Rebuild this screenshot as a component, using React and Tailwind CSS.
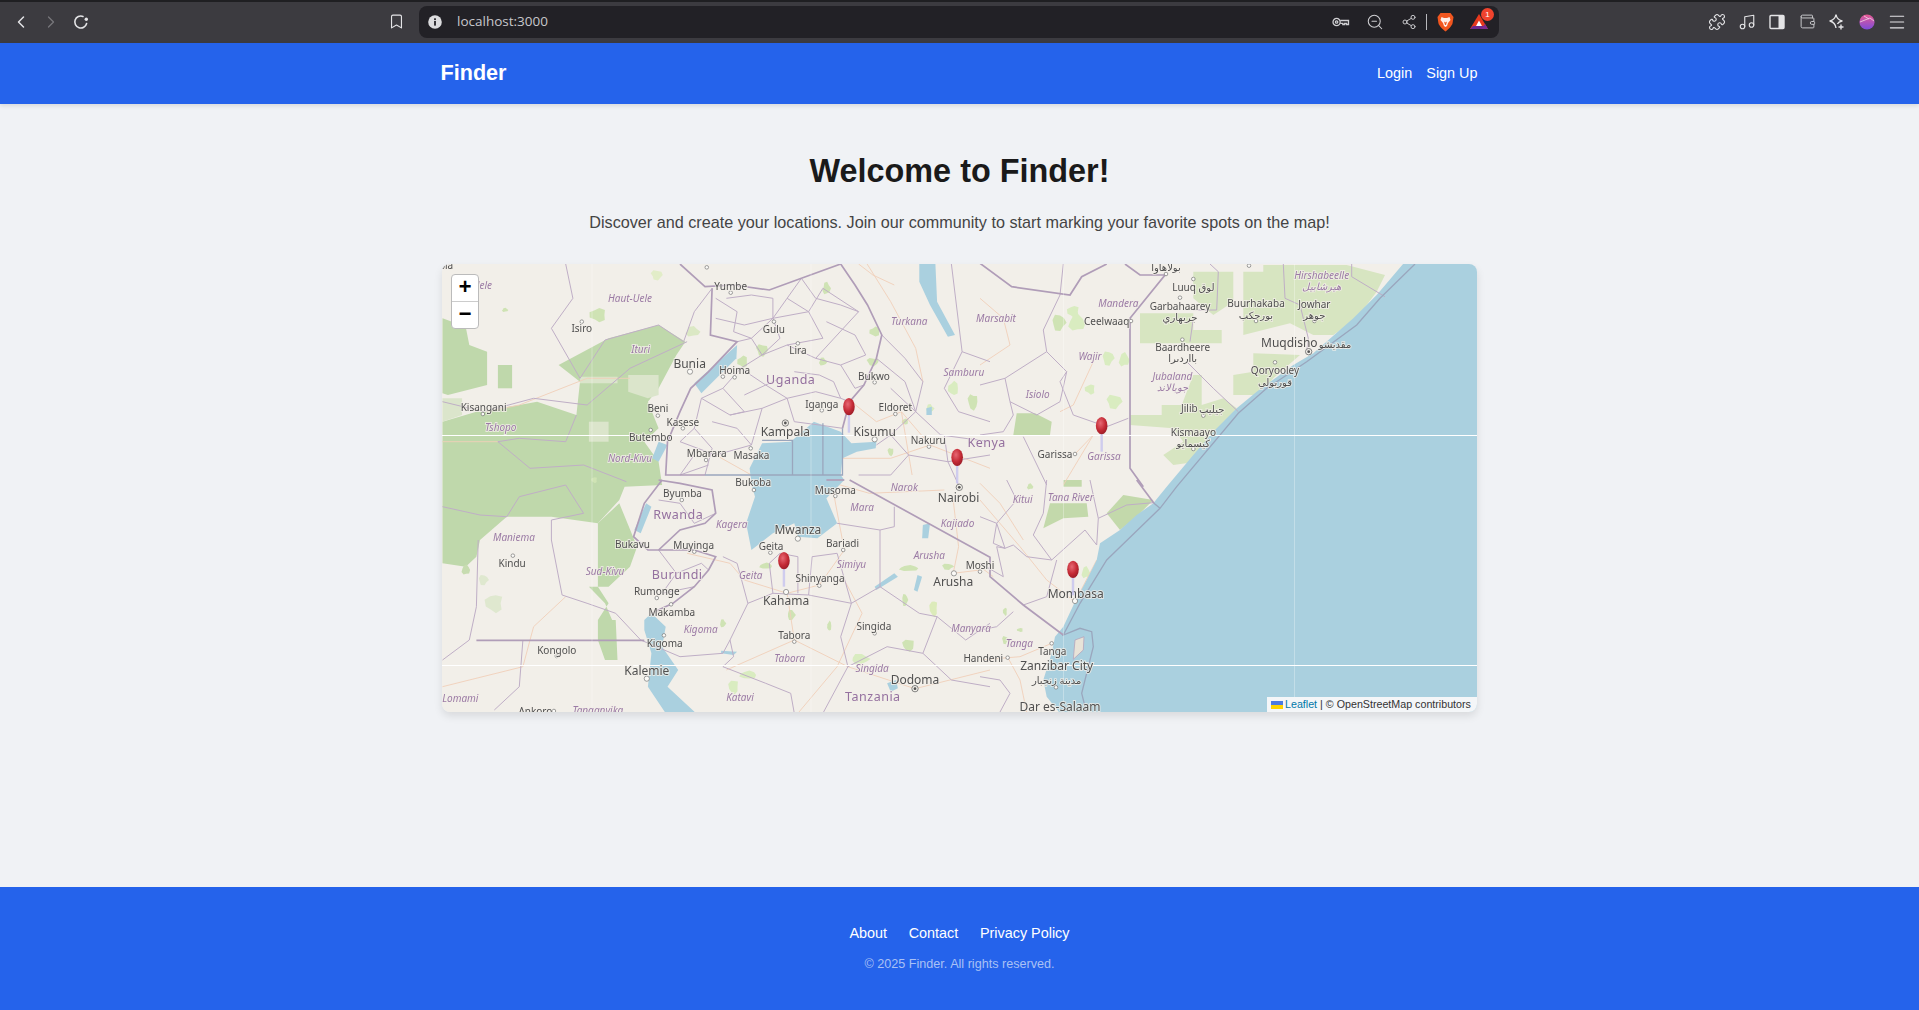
import React from "react";
import { ChevronLeft, ChevronRight, Bookmark, ZoomOut, Share2, Puzzle, Music, Wallet, Menu } from "lucide-react";

const T = {
  a: (x, y) => [430 + x / 2.8, 255 + y / 3],
  b: (x, y) => [430 + x / 2.8, 480 + y / 3],
  c: (x, y) => [980 + x / 3, 255 + y / 3],
  d: (x, y) => [980 + x / 3, 480 + y / 3],
};
const P = (...segs) => {
  const out = [];
  segs.forEach(([k, ...v]) => {
    for (let i = 0; i < v.length; i += 2) out.push(T[k](v[i], v[i + 1]).map((n) => n.toFixed(1)).join(","));
  });
  return out.join(" ");
};
const blobPts = (cx, cy, rx, ry, seed) => {
  const out = [];
  for (let i = 0; i < 9; i++) {
    const a = (i / 9) * Math.PI * 2;
    const j = 0.7 + 0.45 * Math.abs(Math.sin(seed * 7.3 + i * 2.17));
    out.push(`${(cx + Math.cos(a) * rx * j).toFixed(1)},${(cy + Math.sin(a) * ry * j).toFixed(1)}`);
  }
  return out.join(" ");
};

const LAND = "#f2efe9";
const WATER = "#aad0df";
const FOREST = "#bfd8ab";
const SOFT = "#d7e5c1";

const forest = [
  P(["a", 35, 190, 100, 215, 110, 270, 160, 290, 160, 390, 50, 420, 35, 415]),
  P(["a", 35, 500, 130, 470, 250, 450, 300, 440, 410, 480, 420, 380, 360, 330, 500, 250, 640, 210, 715, 260, 690, 300, 640, 400, 610, 440, 640, 520, 600, 560, 640, 620, 650, 690], ["b", 545, 20, 530, 60, 470, 130, 340, 110, 215, 110, 140, 180, 130, 230, 100, 260, 35, 250]),
  P(["b", 470, 130, 530, 70, 580, 200, 560, 260, 500, 320, 445, 320, 490, 370, 510, 420, 470, 420, 520, 420, 525, 540, 490, 540, 470, 480, 470, 420, 500, 370, 470, 320]),
  P(["a", 190, 330, 230, 330, 230, 400, 190, 400]),
];
const patches = [
  P(["a", 555, 360, 640, 360, 640, 420, 610, 430, 555, 410]),
  P(["a", 420, 365, 525, 365, 525, 385, 420, 385]),
  P(["a", 445, 500, 500, 500, 500, 560, 445, 560]),
  P(["a", 35, 430, 90, 430, 90, 480, 35, 500]),
];
const soft = [
  P(["c", 480, 175, 640, 175, 640, 225, 725, 225, 725, 265, 480, 265]),
  P(["c", 640, 50, 760, 50, 760, 140, 700, 180, 640, 130]),
  P(["c", 790, 50, 850, 50, 850, 30, 1100, 30, 1215, 60, 1190, 110, 1130, 190, 1060, 240, 1000, 240, 930, 205, 790, 240]),
  P(["c", 820, 295, 960, 300, 880, 370, 840, 420, 760, 420, 760, 360, 820, 350]),
  P(["c", 640, 360, 665, 360, 665, 450, 730, 430, 770, 460, 720, 520, 650, 620, 580, 630, 550, 600, 610, 560, 580, 520, 450, 510, 450, 480, 545, 480, 545, 450, 605, 450]),
];
const softForest = [
  P(["d", 210, 70, 320, 70, 325, 110, 250, 115, 190, 145]),
  P(["d", 250, 0, 305, 0, 305, 20, 250, 20]),
  P(["c", 110, 475, 165, 475, 215, 500, 210, 540, 100, 540]),
  P(["d", 430, 45, 520, 60, 470, 110, 420, 150, 380, 100]),
];
const blobs = [
  ["c", 237, 203, 7, 8, "#cfe3b4"], ["c", 290, 205, 8, 8, "#d9ecc0"], ["c", 280, 170, 6, 6, "#d9ecc0"], ["c", 385, 310, 6, 7, "#d9ecc0"], ["c", 432, 315, 5, 7, "#d9ecc0"], ["c", 330, 403, 5, 5, "#d9ecc0"], ["c", 403, 440, 8, 7, "#d9ecc0"],
  ["a", 210, 165, 3, 2, "#cfe3b4"], ["a", 470, 180, 8, 7, "#cfe3b4"], ["a", 635, 60, 6, 5, "#e2edc8"], ["a", 735, 230, 7, 5, "#dbe8c4"], ["a", 875, 320, 5, 6, "#cfe3b4"], ["a", 930, 285, 6, 6, "#cfe3b4"], ["a", 1110, 100, 4, 6, "#cfe3b4"], ["a", 1245, 230, 5, 5, "#cfe3b4"], ["a", 1240, 320, 6, 4, "#cfe3b4"], ["a", 1100, 320, 4, 4, "#cfe3b4"], ["a", 1465, 400, 5, 7, "#d9ecc0"], ["a", 1520, 440, 5, 8, "#cfe3b4"], ["a", 1400, 460, 4, 4, "#d9ecc0"], ["a", 1330, 500, 3, 3, "#cfe3b4"], ["a", 1290, 590, 3, 4, "#cfe3b4"],
  ["b", 820, 430, 3, 4, "#cfe3b4"], ["b", 1118, 438, 2, 5, "#cfe3b4"], ["b", 1340, 495, 6, 6, "#cfe3b4"], ["b", 1205, 537, 9, 5, "#d9ecc0"], ["b", 890, 585, 8, 4, "#d9ecc0"], ["b", 850, 620, 5, 7, "#d9ecc0"], ["b", 1012, 405, 4, 5, "#cfe3b4"], ["b", 940, 258, 6, 3, "#cfe3b4"], ["b", 1410, 385, 4, 8, "#dcebba"], ["b", 1330, 360, 3, 6, "#cfe3b4"], ["b", 1340, 265, 9, 3, "#cfe3b4"], ["b", 180, 370, 9, 9, "#dfe8cf"], ["b", 150, 300, 5, 5, "#dfe8cf"], ["b", 100, 270, 4, 5, "#c7dcb0"], ["b", 460, 0, 3, 3, "#cfe3b4"], ["b", 1450, 260, 6, 3, "#cfe3b4"],
  ["d", 317, 278, 4, 6, "#d9ecc0"], ["d", 75, 395, 2, 4, "#cfe3b4"], ["d", 75, 480, 3, 4, "#cfe3b4"], ["d", 150, 20, 3, 3, "#cfe3b4"], ["d", 120, 450, 3, 2, "#cfe3b4"],
];

const sea = P(
  ["c", 1275, 20, 1190, 120, 1120, 190, 1000, 295, 940, 330, 830, 410, 770, 460, 700, 530, 640, 600, 560, 695],
  ["d", 520, 70, 470, 105, 420, 150, 360, 190, 350, 240, 320, 300, 285, 365, 250, 440, 225, 470, 215, 520, 190, 600, 200, 650, 240, 700, 1600, 700, 1600, -300],
  ["c", 1600, 20]
);
const zanzibar = P(["d", 285, 480, 312, 470, 310, 510, 280, 538]);
const lakes = [
  P(["a", 740, 385, 860, 270, 858, 310, 760, 415]),
  P(["a", 930, 565, 1010, 560, 1075, 500, 1150, 530, 1180, 565, 1250, 560, 1248, 580, 1195, 590, 1155, 610, 1150, 660], ["b", 1160, 0, 1110, 55, 1140, 130, 1085, 175, 1030, 170, 1020, 130, 960, 160, 900, 210, 885, 130, 910, 50, 900, 10], ["a", 895, 640]),
  P(["a", 1370, 27, 1415, 27, 1420, 140, 1470, 240, 1450, 245, 1400, 150, 1370, 80]),
  P(["b", 600, 420, 620, 400, 660, 440, 650, 500, 695, 570, 665, 620, 745, 700, 660, 700, 610, 620, 620, 520, 600, 450]),
  P(["b", 605, 70, 620, 80, 590, 160, 572, 150]),
  P(["a", 640, 560, 665, 570, 640, 620, 622, 610]),
  P(["b", 1300, 280, 1310, 290, 1250, 330, 1245, 320]),
  P(["b", 1365, 285, 1378, 290, 1365, 335, 1355, 330]),
  P(["b", 1280, 610, 1305, 600, 1310, 625, 1290, 635]),
  P(["b", 1380, 135, 1400, 130, 1395, 175, 1378, 175]),
  P(["b", 815, 512, 860, 515, 850, 525, 815, 520]),
  P(["a", 1390, 460, 1405, 455, 1405, 480, 1390, 480]),
];

const national = [
  P(["a", 700, 27, 770, 95, 850, 90, 950, 105, 1040, 70, 1150, 27, 1190, 90, 1225, 150, 1265, 240, 1250, 310, 1215, 390, 1175, 440, 1155, 520]),
  P(["a", 770, 660, 660, 660, 665, 560, 700, 470, 730, 400, 780, 350, 860, 260, 785, 240, 790, 100]),
  P(["b", 1175, 0, 1568, 232], ["d", 30, 290, 130, 375, 250, 465]),
  P(["c", 0, 25, 95, 95, 270, 120, 305, 65, 380, 27]),
  P(["c", 435, 27, 480, 60, 555, 60, 450, 190, 450, 640, 490, 695]),
  P(["d", 470, 0, 522, 70]),
  P(["b", 130, 481, 600, 481]),
  P(["b", 650, 0, 600, 70, 570, 170, 610, 210, 740, 210, 800, 230, 780, 270, 740, 320, 680, 370, 620, 400]),
  P(["b", 640, 0, 700, 10, 790, 30, 800, 100, 770, 130, 700, 150, 640, 210]),
  P(["b", 1110, 0, 1160, 0]),
];
const waterLines = [
  P(["a", 770, 660, 1155, 660, 1155, 520]),
  P(["a", 930, 556, 1015, 556, 1015, 660]),
  P(["a", 1100, 505, 1100, 660]),
  P(["d", 522, 70, 540, 85]),
  P(["c", 1305, 27, 1200, 130, 1130, 210, 980, 320, 860, 400, 775, 475, 590, 695], ["d", 540, 85, 380, 240, 300, 370, 250, 465, 300, 445, 335, 455, 340, 500, 305, 640, 320, 700]),
];
const admin = [
  P(["a", 380, 27, 400, 130, 340, 220, 420, 370, 490, 255, 640, 210, 710, 260, 740, 170, 790, 100]),
  P(["a", 800, 130, 860, 170, 850, 230, 900, 250, 960, 190, 1000, 130, 1040, 70]),
  P(["a", 860, 260, 900, 250, 930, 300, 870, 340, 820, 400, 760, 430, 740, 520, 700, 560]),
  P(["a", 930, 300, 1000, 270, 1080, 310, 1150, 330, 1190, 400, 1215, 390]),
  P(["a", 870, 340, 940, 390, 1000, 430, 1080, 410, 1150, 430, 1175, 440]),
  P(["a", 760, 430, 840, 480, 930, 460, 1000, 430, 1020, 500, 1090, 510, 1155, 520]),
  P(["a", 700, 560, 800, 600, 900, 570, 930, 460]),
  P(["a", 740, 520, 790, 580, 770, 660]),
  P(["a", 1000, 130, 1060, 170, 1100, 100, 1200, 170, 1080, 310]),
  P(["a", 960, 190, 1060, 170, 1100, 250, 1000, 270]),
  P(["a", 800, 190, 880, 210, 960, 190, 980, 250, 930, 300]),
  P(["a", 1110, 200, 1190, 240, 1220, 300, 1150, 330]),
  P(["a", 1040, 70, 1080, 130, 1150, 150, 1200, 170]),
  P(["a", 830, 130, 900, 120, 960, 130, 960, 190]),
  P(["a", 880, 420, 940, 390, 980, 370]),
  P(["a", 820, 400, 880, 470, 840, 480]),
  P(["a", 1020, 350, 1090, 360, 1130, 380, 1150, 430]),
  P(["a", 790, 500, 860, 520, 900, 570]),
  P(["a", 740, 600, 700, 660, 780, 630]),
  P(["a", 1265, 240, 1330, 310, 1380, 380, 1360, 470, 1430, 540, 1568, 560]),
  P(["a", 1250, 310, 1330, 380, 1360, 470, 1290, 540, 1250, 570]),
  P(["a", 1460, 27, 1490, 290, 1568, 320]),
  P(["a", 1490, 290, 1440, 400, 1480, 470, 1568, 500]),
  P(["a", 1290, 540, 1340, 600, 1290, 660, 1200, 660]),
  P(["a", 1340, 600, 1450, 620, 1568, 600]),
  P(["a", 1440, 540, 1450, 620, 1480, 690]),
  P(["a", 1290, 400, 1360, 470]),
  P(["a", 35, 440, 150, 470, 290, 430, 440, 450, 560, 340, 720, 260]),
  P(["a", 410, 480, 380, 560, 250, 550, 190, 560, 280, 640, 430, 630, 550, 680]),
  P(["b", 35, 80, 140, 105, 215, 110, 250, 50, 380, 15, 430, 100, 340, 120, 340, 180, 370, 345, 440, 370, 520, 400, 590, 480]),
  P(["b", 35, 540, 110, 480, 130, 380, 135, 180]),
  P(["b", 260, 480, 250, 620, 180, 690]),
  P(["b", 590, 480, 700, 530, 820, 520, 840, 480, 890, 370, 860, 250, 820, 230]),
  P(["b", 890, 370, 960, 340, 1060, 345, 1180, 370, 1260, 320, 1260, 150, 1140, 130]),
  P(["b", 840, 480, 850, 530, 820, 560, 940, 610, 1010, 640, 1020, 700]),
  P(["b", 1180, 370, 1150, 470, 1170, 560, 1100, 700]),
  P(["b", 1260, 320, 1370, 400, 1420, 410, 1380, 520, 1280, 500, 1170, 560]),
  P(["b", 1300, 80, 1300, 140, 1260, 150]),
  P(["b", 1380, 520, 1460, 600, 1568, 620]),
  P(["b", 1420, 410, 1500, 480, 1568, 430]),
  P(["b", 640, 60, 700, 70, 740, 130, 800, 100]),
  P(["b", 640, 210, 690, 280, 650, 340, 740, 320]),
  P(["b", 690, 280, 760, 250, 780, 270]),
  P(["b", 960, 340, 950, 250, 980, 220, 1030, 230, 1030, 340]),
  P(["b", 1060, 345, 1070, 230, 1140, 220, 1180, 370]),
  P(["d", 0, 250, 70, 290, 50, 200, 75, 205, 100, 195, 140, 230, 215, 240, 160, 165, 190, 100, 200, 0]),
  P(["d", 215, 240, 315, 150, 350, 195]),
  P(["d", 50, 130, 40, 190, 75, 205]),
  P(["d", 0, 110, 50, 130, 75, 205]),
  P(["d", 130, 375, 200, 350, 230, 240]),
  P(["d", 100, 395, 50, 440, 0, 450]),
  P(["d", 355, 115, 440, 75, 520, 68]),
  P(["d", 330, 0, 355, 115, 350, 195]),
  P(["d", 80, 0, 110, 60, 50, 130]),
  P(["d", 0, 590, 60, 600, 90, 640, 60, 696]),
  P(["c", 190, 225, 200, 290, 260, 350, 240, 380, 280, 480, 380, 515, 445, 490]),
  P(["c", 0, 390, 75, 370, 90, 440, 170, 480, 240, 440, 260, 350]),
  P(["c", 75, 370, 200, 290]),
  P(["c", 250, 27, 240, 120, 190, 225]),
  P(["c", 130, 545, 200, 690]),
  P(["c", 0, 540, 70, 530, 100, 480, 90, 440]),
  P(["c", 620, 320, 700, 400, 775, 470]),
  P(["c", 640, 190, 630, 260]),
  P(["c", 640, 165, 710, 165, 715, 50, 690, 27]),
  P(["c", 910, 27, 915, 130, 960, 150, 985, 250, 980, 290]),
  P(["c", 1115, 27, 1115, 65, 1215, 125]),
];
const roads = [
  P(["a", 160, 470, 250, 450, 440, 370, 560, 370]),
  P(["a", 1180, 440, 1250, 500, 1320, 470, 1400, 570, 1568, 640]),
  P(["a", 1150, 610, 1290, 610, 1400, 570]),
  P(["a", 1220, 20, 1290, 140, 1360, 280, 1380, 380]),
  P(["a", 35, 560, 190, 560]),
  P(["a", 800, 600, 900, 660]),
  P(["a", 1200, 27, 1240, 60, 1300, 90]),
  P(["a", 1320, 470, 1350, 660]),
  P(["b", 35, 620, 110, 600, 260, 560, 290, 440, 380, 350]),
  P(["b", 1160, 300, 1210, 400, 1140, 560, 1030, 700]),
  P(["b", 1020, 480, 1170, 560, 1358, 626, 1568, 570]),
  P(["b", 1000, 340, 1020, 480, 830, 570]),
  P(["b", 1130, 40, 1160, 210, 1090, 315, 1000, 340]),
  P(["b", 720, 220, 840, 250, 880, 300, 1000, 340]),
  P(["b", 1100, 0, 1230, 40, 1440, 30]),
  P(["b", 1465, 60, 1480, 200, 1465, 280, 1540, 270]),
  P(["d", 285, 365, 200, 300, 120, 200, 0, 60]),
  P(["d", 40, 290, 0, 260]),
  P(["d", 215, 490, 120, 530, 0, 540]),
  P(["d", 285, 365, 350, 240]),
  P(["c", 285, 597, 340, 540, 250, 690]),
  P(["c", 0, 130, 70, 190, 90, 270, 0, 330]),
  P(["c", 340, 320, 280, 450, 240, 470]),
  P(["d", 85, 535, 120, 600, 140, 696]),
  P(["d", 0, 10, 60, 70, 130, 180]),
];

const L = [
  ["a", 45, 32, "bia", "c"], ["a", 120, 90, "Bas-Uele", "r"], ["a", 560, 130, "Haut-Uele", "r"], ["a", 842, 95, "Yumbe", "c"], ["a", 963, 223, "Gulu", "c"], ["a", 425, 220, "Isiro", "c"], ["a", 590, 284, "Ituri", "r"], ["a", 1030, 287, "Lira", "c"], ["a", 727, 325, "Bunia", "C"], ["a", 853, 346, "Hoima", "c"], ["a", 1010, 374, "Uganda", "R"], ["a", 1243, 363, "Bukwo", "c"], ["a", 1342, 200, "Turkana", "r"], ["a", 1495, 353, "Samburu", "r"], ["a", 150, 458, "Kisangani", "c"], ["a", 638, 461, "Beni", "c"], ["a", 708, 501, "Kasese", "c"], ["a", 198, 517, "Tshopo", "r"], ["a", 618, 547, "Butembo", "c"], ["a", 1097, 447, "Iganga", "c"], ["a", 1303, 458, "Eldoret", "c"], ["a", 995, 531, "Kampala", "C"], ["a", 1245, 530, "Kisumu", "C"], ["a", 1395, 555, "Nakuru", "c"], ["a", 775, 596, "Mbarara", "c"], ["a", 900, 602, "Masaka", "c"], ["a", 560, 609, "Nord-Kivu", "r"], ["a", 905, 682, "Bukoba", "c"],
  ["b", 707, 40, "Byumba", "c"], ["b", 1135, 30, "Musoma", "c"], ["b", 1328, 22, "Narok", "r"], ["b", 1210, 83, "Mara", "r"], ["b", 1480, 52, "Nairobi", "C"], ["b", 695, 105, "Rwanda", "R"], ["b", 845, 133, "Kagera", "r"], ["b", 1477, 130, "Kajiado", "r"], ["b", 235, 172, "Maniema", "r"], ["b", 1030, 150, "Mwanza", "C"], ["b", 567, 193, "Bukavu", "c"], ["b", 738, 195, "Muyinga", "c"], ["b", 955, 198, "Geita", "c"], ["b", 1155, 190, "Bariadi", "c"], ["b", 230, 250, "Kindu", "c"], ["b", 1398, 225, "Arusha", "r"], ["b", 1180, 253, "Simiyu", "r"], ["b", 490, 273, "Sud-Kivu", "r"], ["b", 692, 284, "Burundi", "R"], ["b", 898, 286, "Geita", "r"], ["b", 1092, 296, "Shinyanga", "c"], ["b", 1540, 257, "Moshi", "c"], ["b", 1465, 305, "Arusha", "C"], ["b", 635, 335, "Rumonge", "c"], ["b", 997, 362, "Kahama", "C"], ["b", 677, 397, "Makamba", "c"], ["b", 1243, 440, "Singida", "c"], ["b", 758, 447, "Kigoma", "r"], ["b", 1515, 446, "Manyara", "r"], ["b", 1020, 465, "Tabora", "c"], ["b", 657, 489, "Kigoma", "c"], ["b", 355, 510, "Kongolo", "c"], ["b", 1007, 536, "Tabora", "r"], ["b", 607, 573, "Kalemie", "C"], ["b", 1238, 565, "Singida", "r"], ["b", 1358, 598, "Dodoma", "C"], ["b", 1240, 650, "Tanzania", "R"], ["b", 85, 654, "Lomami", "r"], ["b", 868, 651, "Katavi", "r"], ["b", 295, 695, "Ankoro", "c"], ["b", 470, 692, "Tanganyika", "r"],
  ["c", 558, 38, "بولاهاوا", "c"], ["c", 1025, 60, "Hirshabeelle", "r"], ["c", 1025, 95, "هيرشابيل", "r"], ["c", 640, 96, "Luuq لوق", "c"], ["c", 600, 154, "Garbahaarey", "c"], ["c", 600, 188, "جربهاري", "c"], ["c", 828, 145, "Buurhakaba", "c"], ["c", 828, 180, "بورحكب", "c"], ["c", 1003, 147, "Jowhar", "c"], ["c", 1003, 182, "جوهر", "c"], ["c", 415, 145, "Mandera", "r"], ["c", 380, 198, "Ceelwaaq", "c"], ["c", 48, 190, "Marsabit", "r"], ["c", 330, 305, "Wajir", "r"], ["c", 608, 276, "Baardheere", "c"], ["c", 608, 310, "بااردىرا", "c"], ["c", 928, 264, "Muqdisho", "C"], ["c", 1065, 267, "مقديشو", "c"], ["c", 885, 347, "Qoryooley", "c"], ["c", 885, 382, "قوريولي", "c"], ["c", 577, 363, "Jubaland", "r"], ["c", 577, 397, "جوبالاند", "r"], ["c", 173, 418, "Isiolo", "r"], ["c", 628, 461, "Jilib", "c"], ["c", 695, 462, "جيليب", "c"], ["c", 640, 532, "Kismaayo", "c"], ["c", 640, 566, "كيسمايو", "c"], ["c", 225, 597, "Garissa", "c"], ["c", 372, 605, "Garissa", "r"], ["c", 20, 562, "Kenya", "R"],
  ["d", 128, 57, "Kitui", "r"], ["d", 272, 53, "Tana River", "r"], ["d", 287, 340, "Mombasa", "C"], ["d", 118, 491, "Tanga", "r"], ["d", 217, 513, "Tanga", "c"], ["d", 10, 536, "Handeni", "c"], ["d", 230, 558, "Zanzibar City", "C"], ["d", 230, 602, "مدينة زنجبار", "c"], ["d", 240, 680, "Dar es-Salaam", "C"],
];
const dots = [
  ["a", 775, 37], ["a", 842, 113], ["a", 963, 200], ["a", 425, 200], ["a", 1030, 265], ["a", 728, 350, 1], ["a", 853, 367], ["a", 820, 365], ["a", 1245, 382], ["a", 148, 477], ["a", 638, 482], ["a", 708, 520], ["a", 618, 525], ["a", 1097, 466], ["a", 1303, 477], ["a", 1245, 553, 1], ["a", 1397, 575], ["a", 773, 615], ["a", 898, 580],
  ["b", 907, 30], ["b", 705, 60], ["b", 1135, 48], ["b", 1030, 176, 1], ["b", 740, 215], ["b", 953, 218], ["b", 1157, 210], ["b", 232, 227], ["b", 1090, 317], ["b", 1540, 275], ["b", 1467, 280, 1], ["b", 635, 354], ["b", 997, 336, 1], ["b", 675, 373], ["b", 1245, 460], ["b", 1020, 485], ["b", 655, 466], ["b", 355, 528], ["b", 607, 596, 1], ["b", 347, 693],
  ["c", 558, 57], ["c", 807, 32], ["c", 640, 72], ["c", 600, 128], ["c", 828, 198], ["c", 1003, 198], ["c", 453, 198], ["c", 607, 254], ["c", 885, 322], ["c", 670, 482], ["c", 640, 582], ["c", 285, 597],
  ["d", 285, 363, 1], ["d", 215, 490], ["d", 83, 533], ["d", 228, 622],
];
const capitals = [["a", 995, 504], ["b", 1358, 626], ["c", 986, 290], ["b", 1482, 22]];
const pins = [["a", 1173, 455], ["a", 1476, 607], ["c", 365, 512], ["d", 279, 268], ["b", 991, 242]];

const labelStyle = {
  c: { fontSize: 10, fill: "#4f4f4f" },
  C: { fontSize: 12, fill: "#505050" },
  r: { fontSize: 10, fill: "#9b7ba5", fontStyle: "italic" },
  R: { fontSize: 12.5, fill: "#94709f", letterSpacing: 0.5 },
};

function MapArt() {
  return (
    <svg viewBox="442 264 1035 448" className="block w-full h-full blur-[0.4px]" preserveAspectRatio="none">
      <defs>
        <radialGradient id="pinRed" cx="0.4" cy="0.35" r="0.7">
          <stop offset="0" stopColor="#e76873" />
          <stop offset="0.6" stopColor="#c42a35" />
          <stop offset="1" stopColor="#981c27" />
        </radialGradient>
      </defs>
      <rect x="442" y="264" width="1035" height="448" fill={LAND} />
      {forest.map((p, i) => <polygon key={i} points={p} fill={FOREST} />)}
      {patches.map((p, i) => <polygon key={i} points={p} fill="#dbe5cb" />)}
      {soft.map((p, i) => <polygon key={i} points={p} fill={SOFT} />)}
      {softForest.map((p, i) => <polygon key={i} points={p} fill="#c3d9ab" />)}
      {blobs.map(([k, x, y, rx, ry, f], i) => {
        const [cx, cy] = T[k](x, y);
        return <polygon key={i} points={blobPts(cx, cy, rx, ry, i + 1)} fill={f} />;
      })}
      {roads.map((p, i) => <polyline key={i} points={p} fill="none" stroke="#f1cfb9" strokeWidth="0.9" />)}
      {lakes.map((p, i) => <polygon key={i} points={p} fill={WATER} />)}
      <polygon points={sea} fill={WATER} />
      <polygon points={zanzibar} fill="#e8e3d8" stroke="#b5a5bb" strokeWidth="0.8" />
      {admin.map((p, i) => <polyline key={i} points={p} fill="none" stroke="#bfaec6" strokeWidth="1" />)}
      {national.map((p, i) => <polyline key={i} points={p} fill="none" stroke="#b09db8" strokeWidth="1.7" />)}
      {waterLines.map((p, i) => <polyline key={i} points={p} fill="none" stroke="#9aa6bd" strokeWidth="1.3" />)}
      <g stroke="#ffffff" strokeOpacity="0.3" strokeWidth="1">
        <line x1="592" y1="264" x2="592" y2="712" />
        <line x1="811" y1="264" x2="811" y2="712" />
        <line x1="1063.5" y1="264" x2="1063.5" y2="712" />
        <line x1="1294.5" y1="264" x2="1294.5" y2="712" />
      </g>
      <g stroke="#ffffff" strokeWidth="1.2">
        <line x1="442" y1="435.5" x2="1477" y2="435.5" />
        <line x1="442" y1="665.5" x2="1477" y2="665.5" />
      </g>
      {dots.map(([k, x, y, big], i) => {
        const [cx, cy] = T[k](x, y);
        return <circle key={i} cx={cx} cy={cy} r={big ? 2.6 : 1.8} fill="#fbfaf7" stroke="#777" strokeWidth="0.7" />;
      })}
      {capitals.map(([k, x, y], i) => {
        const [cx, cy] = T[k](x, y);
        return (
          <g key={i}>
            <circle cx={cx} cy={cy} r="3.2" fill="#f2efe9" stroke="#666" strokeWidth="0.8" />
            <circle cx={cx} cy={cy} r="1.4" fill="#555" />
          </g>
        );
      })}
      {L.map(([k, x, y, t, s], i) => {
        const [tx, ty] = T[k](x, y);
        return (
          <text key={i} x={tx} y={ty} dy="0.35em" textAnchor="middle" fontFamily="'Noto Sans', 'DejaVu Sans', sans-serif" stroke={LAND} strokeOpacity="0.8" strokeWidth="1.8" paintOrder="stroke" {...labelStyle[s]}>
            {t}
          </text>
        );
      })}
      {pins.map(([k, x, y], i) => {
        const [cx, cy] = T[k](x, y);
        return (
          <g key={i}>
            <rect x={cx - 1.2} y={cy + 7} width="2.4" height="19" fill="#c9c5ee" opacity="0.85" />
            <ellipse cx={cx} cy={cy} rx="5.8" ry="8.6" fill="url(#pinRed)" />
          </g>
        );
      })}
    </svg>
  );
}

function Box({ w = "w-[30px]", children, cls = "" }) {
  return <div className={`${w} h-[30px] flex items-center justify-center shrink-0 ${cls}`}>{children}</div>;
}

function BrowserBar() {
  return (
    <div className="h-[43px] shrink-0 bg-[#3c3b40] border-t-2 border-[#1f1f22] flex items-center pl-[6px] pb-[2px] text-[#e4e4e6]">
      <Box><ChevronLeft size={20} strokeWidth={1.8} /></Box>
      <Box><ChevronRight size={20} strokeWidth={1.5} className="text-[#77767b]" /></Box>
      <Box>
        <svg width="18" height="18" viewBox="0 0 18 18" fill="none" stroke="currentColor" strokeWidth="1.6">
          <path d="M14.6 10.5A6 6 0 1 1 11 3.4" strokeLinecap="round" />
          <circle cx="14.3" cy="6.3" r="1.7" fill="currentColor" stroke="none" />
        </svg>
      </Box>
      <Box cls="ml-[285px]"><Bookmark size={17} strokeWidth={1.6} /></Box>
      <div className="ml-[8px] w-[1080px] h-[32px] rounded-lg bg-[#222126] flex items-center pl-[8px] pr-[6px]">
        <svg width="16" height="16" viewBox="0 0 16 16" className="shrink-0">
          <circle cx="8" cy="8" r="6.8" fill="#dcdcde" />
          <rect x="7.1" y="7" width="1.8" height="4.6" fill="#222126" />
          <rect x="7.1" y="4.3" width="1.8" height="1.8" fill="#222126" />
        </svg>
        <span className="ml-[14px] text-[13.5px] text-[#c7c7cb] font-['Open_Sans',sans-serif] leading-none">localhost:3000</span>
        <div className="ml-auto flex items-center">
          <Box w="w-[28px]">
            <svg width="18" height="12" viewBox="0 0 18 12" fill="none" stroke="#cfcfd2" strokeWidth="1.3">
              <circle cx="4.6" cy="6" r="3.6" />
              <circle cx="4.6" cy="6" r="1.2" />
              <path d="M8.2 4.5H16.5V8.5H14.5V7.4H12.7V8.5H10.8V7.4H8.2" />
            </svg>
          </Box>
          <Box w="w-[28px]" cls="ml-[6px]"><ZoomOut size={18} strokeWidth={1.4} className="text-[#cfcfd2]" /></Box>
          <Box w="w-[28px]" cls="ml-[6px]"><Share2 size={16} strokeWidth={1.4} className="text-[#cfcfd2]" /></Box>
          <div className="ml-[3px] w-px h-[16px] bg-[#b8b8bc]" />
          <Box w="w-[28px]" cls="ml-[4px]">
            <svg width="17" height="20" viewBox="0 0 17 20">
              <path d="M3.5 1 H13.5 L15 3 L16.5 5 L15.6 11 C15 14 11 17.5 8.5 19.5 C6 17.5 2 14 1.4 11 L.5 5 L2 3 Z" fill="#f1561f" />
              <path d="M4.5 5 L7 6 H10 L12.5 5 L13.5 8 L11 11 L10 14 L8.5 15 L7 14 L6 11 L3.5 8 Z" fill="#ffffff" opacity="0.9" />
              <path d="M7 9.5 L8.5 10.5 L10 9.5 L9 13 H8 Z" fill="#f1561f" />
            </svg>
          </Box>
          <Box w="w-[28px]" cls="ml-[6px] relative">
            <svg width="20" height="18" viewBox="0 0 20 18">
              <path d="M10 1 L19 16 H1 Z" fill="#e8391d" />
              <path d="M19 16 H1 L4 13 H16 Z" fill="#6b2a8e" />
              <path d="M16 11 L19 16 H12 Z" fill="#7c2c91" />
              <path d="M10 7.5 L13 13 H7 Z" fill="#ffffff" />
            </svg>
            <span className="absolute right-[-1px] top-[1px] w-[13px] h-[13px] rounded-full bg-[#f0432d] text-white text-[8px] leading-[13px] text-center font-['Liberation_Sans',sans-serif]">1</span>
          </Box>
        </div>
      </div>
      <Box cls="ml-[203px]"><Puzzle size={18} strokeWidth={1.5} /></Box>
      <Box><Music size={18} strokeWidth={1.5} /></Box>
      <Box>
        <svg width="16" height="16" viewBox="0 0 16 16">
          <rect x="1" y="1.5" width="14" height="13" rx="1" fill="none" stroke="#e4e4e6" strokeWidth="1.4" />
          <rect x="9.5" y="1.5" width="5.5" height="13" fill="#e4e4e6" />
        </svg>
      </Box>
      <Box><Wallet size={17} strokeWidth={1.4} className="text-[#c8c8cb]" /></Box>
      <Box>
        <svg width="18" height="18" viewBox="0 0 18 18" fill="none" stroke="#e4e4e6" strokeWidth="1.4">
          <path d="M8 1.5 C8.6 5 10.5 7 14 8 C11.5 8.6 10.2 9.5 9.4 11 M8 15 C7.4 11 5.5 9 2 8 C5.5 7 7.4 5 8 1.5" strokeLinejoin="round" />
          <path d="M13 11.5V16.5M10.5 14H15.5" />
        </svg>
      </Box>
      <Box>
        <svg width="16" height="16" viewBox="0 0 16 16">
          <defs>
            <linearGradient id="prof" x1="0" y1="0" x2="0" y2="1">
              <stop offset="0" stopColor="#e85a92" />
              <stop offset="1" stopColor="#7d4cdb" />
            </linearGradient>
          </defs>
          <circle cx="8" cy="8" r="7.6" fill="url(#prof)" />
          <path d="M1 8 L11 4 L15 7 M5 2 L10 5" fill="none" stroke="#f3d6e4" strokeWidth="0.8" />
        </svg>
      </Box>
      <Box><Menu size={20} strokeWidth={1.3} /></Box>
    </div>
  );
}

export default function App() {
  return (
    <div className="h-[1010px] flex flex-col bg-[#f0f2f5] font-['Liberation_Sans',Arial,sans-serif] overflow-hidden">
      <BrowserBar />
      <nav className="h-[61px] shrink-0 bg-[#2563eb] text-white shadow-[0_2px_4px_rgba(0,0,0,0.1)] relative">
        <div className="w-[1036px] mx-auto h-full flex items-center justify-between">
          <a className="text-[21.6px] font-bold -ml-px">Finder</a>
          <div className="flex gap-[14px] text-[14.4px]">
            <a>Login</a>
            <a>Sign Up</a>
          </div>
        </div>
      </nav>
      <main className="flex-1 flex flex-col items-center pt-[49px]">
        <h1 className="text-[32.4px] leading-[37px] font-bold text-[#1a1a1a]">Welcome to Finder!</h1>
        <p className="mt-[23px] text-[16.2px] leading-[18px] text-[#444]">Discover and create your locations. Join our community to start marking your favorite spots on the map!</p>
        <div className="mt-[33px] w-[1035px] h-[448px] relative rounded-lg overflow-hidden shadow-[0_4px_8px_rgba(0,0,0,0.1)]">
          <MapArt />
          <div className="absolute left-[9px] top-[10px] w-[28px] rounded-[4px] bg-white border border-[#bbb] overflow-hidden text-black font-['Liberation_Mono','Liberation_Sans',sans-serif] font-bold">
            <div className="h-[27px] pt-[2px] flex items-center justify-center border-b border-[#ccc] text-[22px] leading-none">+</div>
            <div className="h-[26px] pt-[2px] flex items-center justify-center text-[22px] leading-none">−</div>
          </div>
          <div className="absolute right-0 bottom-0 h-[15px] w-[210px] bg-[#f4f6f8] flex items-center pl-[4px] text-[10.7px] leading-none text-[#333] whitespace-nowrap">
            <svg width="12" height="8" viewBox="0 0 12 8" className="mr-[2px] shrink-0">
              <rect width="12" height="4" fill="#4c7be1" />
              <rect y="4" width="12" height="4" fill="#ffd500" />
            </svg>
            <a className="text-[#0078a8]">Leaflet</a>
            <span className="ml-[3px]">| © OpenStreetMap contributors</span>
          </div>
        </div>
      </main>
      <footer className="h-[123px] shrink-0 bg-[#2563eb] flex flex-col items-center pt-[38px]">
        <div className="flex gap-[21.6px] text-[14.4px] leading-[17px] text-white">
          <a>About</a>
          <a>Contact</a>
          <a>Privacy Policy</a>
        </div>
        <p className="mt-[15px] text-[12.6px] leading-[15px] text-[#a9c1f5]">© 2025 Finder. All rights reserved.</p>
      </footer>
    </div>
  );
}
